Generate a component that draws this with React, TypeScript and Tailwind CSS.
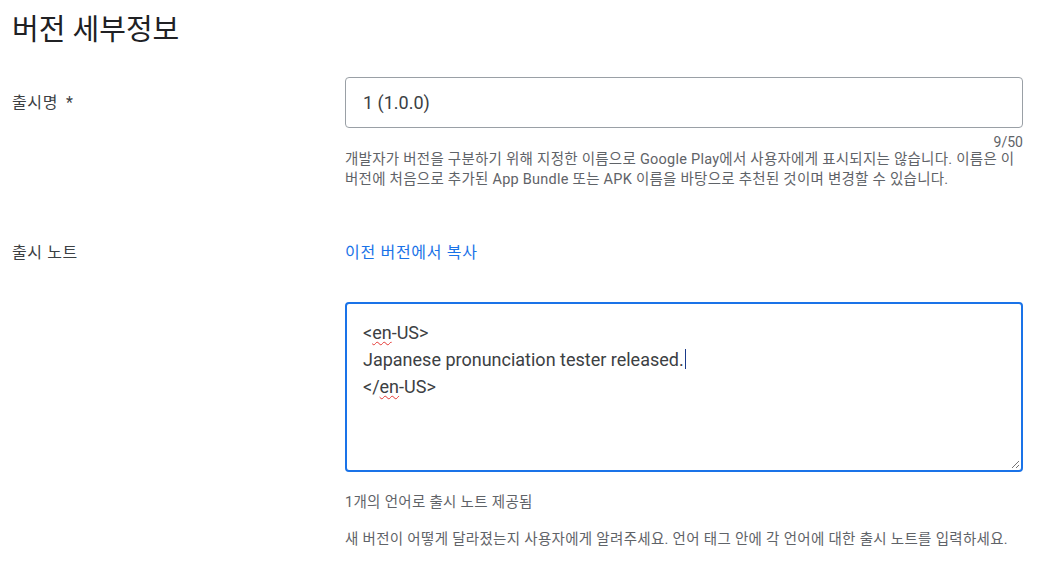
export default function App() {
  const font = { fontFamily: 'Roboto, "Noto Sans CJK KR", "Noto Sans", sans-serif' };
  return (
    <div className="min-h-[572px] w-[1040px] bg-white pl-[12px] pr-[17px]" style={font}>
      <h1 className="pt-[12px] text-[29px] leading-[36px] font-normal text-[#202124]">버전 세부정보</h1>

      {/* release name */}
      <div className="mt-[29px] grid grid-cols-[333px_678px]">
        <div className="flex h-[51px] items-center text-[16px] tracking-[0.6px] text-[#3c4043]">
          출시명<span className="ml-[8px]">*</span>
        </div>
        <div>
          <div className="flex h-[51px] items-center rounded-[4px] border border-[#9aa0a6] px-[17px] text-[18px] text-[#3c4043]">
            1 (1.0.0)
          </div>
          <div className="mt-[6px] text-right text-[14px] leading-[16px] text-[#5f6368]">9/50</div>
          <p className="text-[14.5px] leading-[20px] tracking-[0.25px] text-[#5f6368]">
            개발자가 버전을 구분하기 위해 지정한 이름으로 Google Play에서 사용자에게 표시되지는 않습니다. 이름은 이 버전에 처음으로 추가된 App Bundle 또는 APK 이름을 바탕으로 추천된 것이며 변경할 수 있습니다.
          </p>
        </div>
      </div>

      {/* release notes */}
      <div className="mt-[51px] grid grid-cols-[333px_678px]">
        <div className="text-[16px] leading-[24px] tracking-[0.6px] text-[#3c4043]">출시 노트</div>
        <div>
          <div className="text-[16px] leading-[24px] tracking-[0.7px] text-[#1a73e8]">이전 버전에서 복사</div>
          <div className="relative mt-[37px] h-[170px] rounded-[4px] border-2 border-[#1a73e8] px-[16px] pt-[15px] text-[18px] leading-[27px] text-[#3c4043]">
            <div>
              &lt;<span className="underline decoration-wavy decoration-[#e53935] decoration-1 underline-offset-2">en</span>-US&gt;
            </div>
            <div>
              Japanese pronunciation tester released.
              <span className="ml-[1px] inline-block h-[20px] w-px translate-y-[3px] bg-[#1a3a8a]" />
            </div>
            <div>
              &lt;/<span className="underline decoration-wavy decoration-[#e53935] decoration-1 underline-offset-2">en</span>-US&gt;
            </div>
            <svg className="absolute right-[1px] bottom-[1px]" width="10" height="10" viewBox="0 0 10 10">
              <path d="M9 2 L2 9 M9 6 L6 9" stroke="#757575" strokeWidth="1" />
            </svg>
          </div>
          <div className="mt-[21px] text-[14.5px] leading-[20px] tracking-[0.3px] text-[#5f6368]">1개의 언어로 출시 노트 제공됨</div>
          <div className="mt-[17px] text-[14.5px] leading-[20px] tracking-[0.3px] text-[#5f6368]">
            새 버전이 어떻게 달라졌는지 사용자에게 알려주세요. 언어 태그 안에 각 언어에 대한 출시 노트를 입력하세요.
          </div>
        </div>
      </div>
    </div>
  );
}
